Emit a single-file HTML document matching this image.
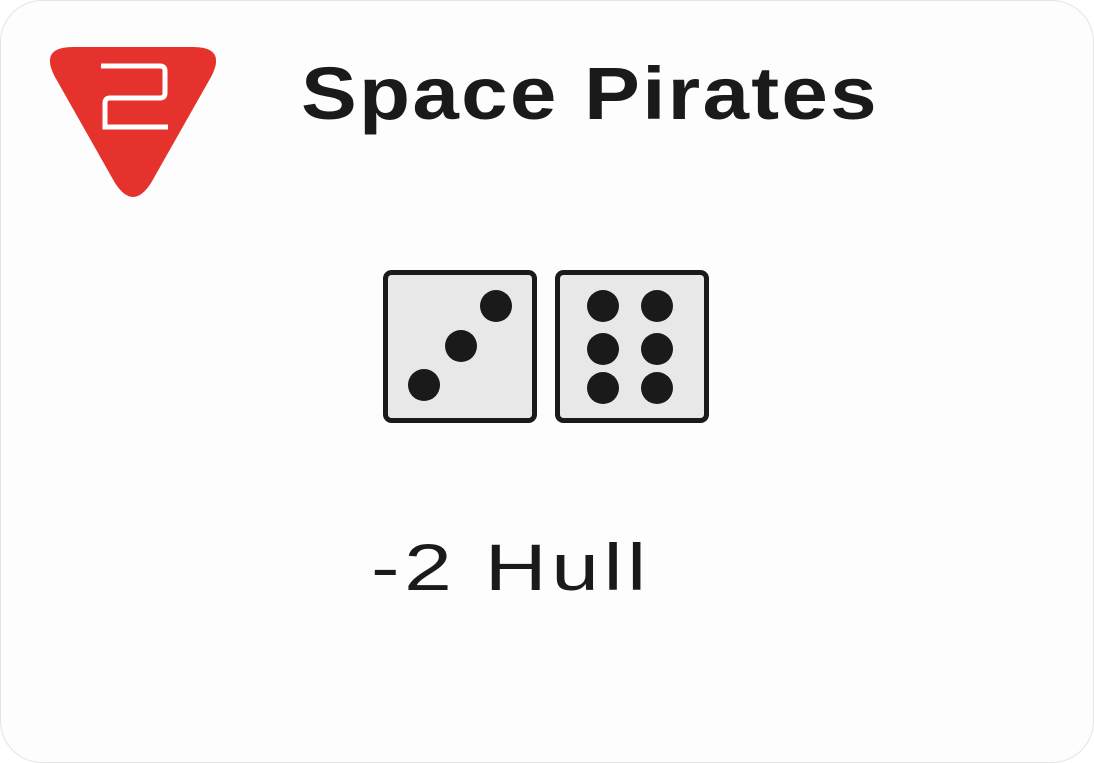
<!DOCTYPE html>
<html><head><style>
html,body{margin:0;padding:0;background:#fff;}
.card{position:absolute;left:0;top:0;width:1092px;height:761px;border:1px solid #e4e4e4;border-radius:42px;background:#fdfdfd;overflow:hidden;}
.t{position:absolute;white-space:nowrap;font-family:"Liberation Sans","DejaVu Sans",sans-serif;color:#1a1a1a;transform-origin:0 0;}
</style></head><body>
<div class="card">
<svg width="1094" height="763" style="position:absolute;left:0;top:0">
  <path d="M72 46 L192 46 Q226 46 210 76 L150 182 Q132 210 114 182 L54 76 Q38 46 72 46 Z" fill="#e5322d"/>
  <path d="M100 65 H159 Q164 65 164 70 V92 Q164 97 159 97 H109 Q104 97 104 102 V126 H167" fill="none" stroke="#fff" stroke-width="5"/>
  <rect x="384.5" y="271.5" width="149" height="148" rx="6" fill="#e8e8e8" stroke="#1a1a1a" stroke-width="5"/>
  <rect x="556.5" y="271.5" width="149" height="148" rx="6" fill="#e8e8e8" stroke="#1a1a1a" stroke-width="5"/>
  <g fill="#1a1a1a">
    <circle cx="423" cy="384" r="16"/><circle cx="460" cy="345" r="16"/><circle cx="495" cy="305" r="16"/>
    <circle cx="602" cy="305" r="16"/><circle cx="656" cy="305" r="16"/>
    <circle cx="602" cy="348" r="16"/><circle cx="656" cy="348" r="16"/>
    <circle cx="602" cy="387" r="16"/><circle cx="656" cy="387" r="16"/>
  </g>
</svg>
<div class="t" style="left:300px;top:50px;font-size:74px;font-weight:bold;transform:scaleX(1.13);letter-spacing:2px">Space Pirates</div>
<div class="t" style="left:370px;top:528px;font-size:66px;transform:scaleX(1.3);letter-spacing:3.5px">-2 Hull</div>
</div>
</body></html>
